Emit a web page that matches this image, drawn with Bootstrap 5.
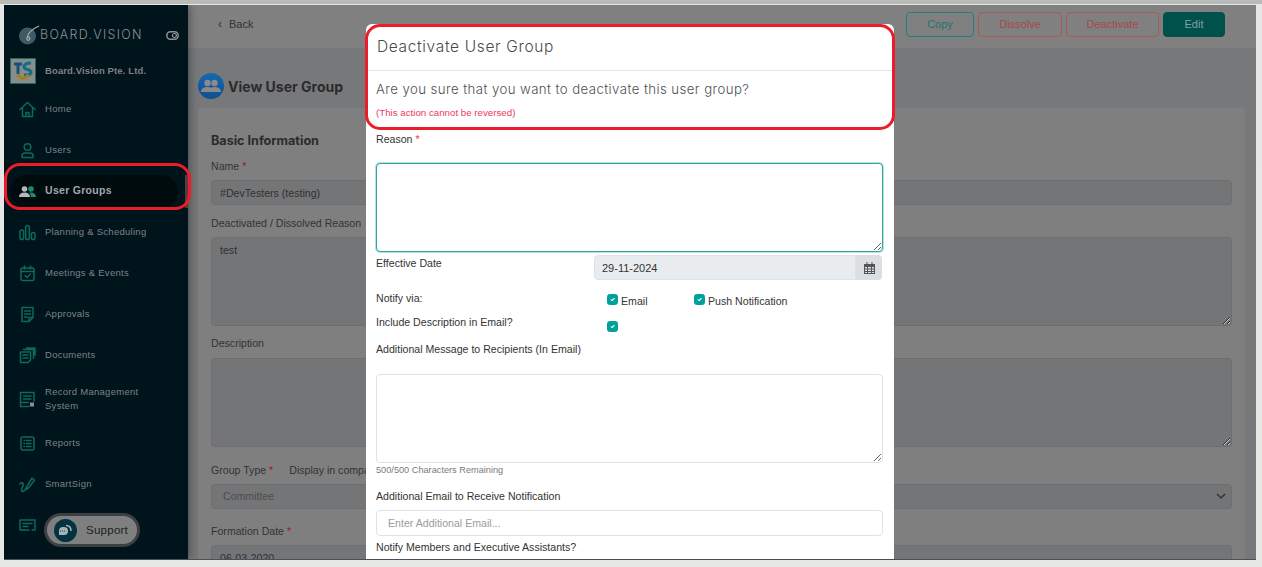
<!DOCTYPE html>
<html lang="en">
<head>
<meta charset="utf-8">
<title>View User Group</title>
<link href="https://cdn.jsdelivr.net/npm/bootstrap@5.3.0/dist/css/bootstrap.min.css" rel="stylesheet">
<style>
html,body{height:100%;overflow:hidden}
body{margin:0;padding:5px 6px 7px 4px;font-family:"Liberation Sans",Arial,sans-serif;font-size:10.6px;color:#2f3030;
 background:linear-gradient(#b9bbb9 0,#b9bbb9 4px,#e6e6e6 4px,#e6e8e6 100%)}
.frame{height:555px;overflow:hidden;border-bottom:1px solid #4a4f5a;background:#77787a}
.side{width:184px;flex:none;background:#00141c;box-shadow:2px 0 8px rgba(0,0,0,.35);z-index:2;color:#868c8e;padding-top:18px}
.brandrow{height:24px;padding-left:14px;padding-right:9px}
.brandtxt{font-family:Inter,"Liberation Sans",sans-serif;font-size:12.4px;font-weight:300;letter-spacing:1.35px;color:#8d9192}
.orgrow{margin-top:11px;padding-left:6px;height:26px}
.orgtxt{font-size:9.5px;font-weight:700;color:#7c8284;margin-left:9px;letter-spacing:.12px}
.orglogo{width:26px;height:26px;background:#8a8c8c;border:1px solid #1a6e60}
.navlist{margin-top:4.5px}
.navrow{height:41px;padding-left:15px;font-size:9.5px;color:#7d8385;letter-spacing:.28px}
.navrow svg{width:17px;height:17px;flex:none;margin-right:9px;fill:none;stroke:#0b6a5c;stroke-width:1.5;stroke-linecap:round;stroke-linejoin:round}
.navrow.tall{height:47.5px;line-height:14px}
.navrow.current{color:#a3a7a8;font-size:10.5px;font-weight:700;letter-spacing:.3px;background:none;position:relative}
.activepill{position:absolute;left:6px;top:4px;width:168px;height:33px;border-radius:17px;background:#000b0e}
.activebar{position:absolute;right:0;top:4px;width:3px;height:33px;background:#5a3a3e}
.current>svg,.current>span{position:relative}
.content{min-width:0}
.topbar{height:43px;background:#808080;padding:0 31px 4px 30px}
.backlink{color:#333;font-size:11px;text-decoration:none;margin-bottom:2px}
.backlink span{font-size:12px;margin-right:7px}
.tbtn{height:25px;font-size:11px;padding:0;border-radius:4px;--bs-btn-font-size:11px}
.tcopy{width:68px;color:#1f7472;border:1px solid #1f7f7d;background:none}
.tdis{width:84px;color:#a8484a;border:1px solid #a85a5a;background:none}
.tdea{width:93px;color:#a8484a;border:1px solid #a85a5a;background:none}
.tedit{width:62px;background:#00504c;color:#80a4a2;border:1px solid #00504c}
.pagehead{height:60px;padding:16px 0 0 10px}
.headcircle{width:26px;height:26px;border-radius:50%;background:linear-gradient(#1768b0,#0f4f90);margin-right:4px;flex:none}
.headtitle{font-family:Inter,"Liberation Sans",sans-serif;font-weight:700;font-size:14px;color:#2a2b2c}
.sheet{margin:0 11px 0 10px;background:#7f7f7f;padding:25px 13px 0;border-radius:4px 4px 0 0;height:460px;overflow:hidden}
.sheettitle{font-family:Inter,"Liberation Sans",sans-serif;font-weight:700;font-size:12.6px;color:#2a2b2c;line-height:16px;margin:0 0 11px}
.dimlabel{font-size:10.6px;line-height:13px;color:#333;margin-bottom:7px;display:block}
.dimlabel.roomy{margin-bottom:8px}
.dimlabel b{color:#a11;font-weight:400}
.dimfield,.dimfield:disabled{background:#747577;border:1px solid #6d6e70;border-radius:4px;color:#2f3030;font-size:10.6px;height:25px;padding:0 8px;margin-bottom:12px;box-shadow:none}
textarea.dimfield,textarea.dimfield:disabled{height:89px;padding:5px 8px;margin-bottom:11px;display:block}
.dimselect,.dimselect:disabled{background-color:#747577;border:1px solid #6d6e70;border-radius:4px;color:#4c4d4e;font-size:10.6px;height:25px;padding:0 11px;margin-bottom:16px;--bs-form-select-bg-img:none;background-image:none}
.groupline{margin-top:17px}
.selwrap{position:relative}
.selwrap svg{position:absolute;right:6px;top:9px;width:10px;height:7px;fill:none;stroke:#333;stroke-width:1.5}
.support{position:absolute;left:40px;top:508px;width:96px;height:34px;border-radius:17px;background:#7e8080;border:3px solid #3c4042;z-index:3;color:#1f2122;font-size:11.6px;letter-spacing:.2px}
.supportdot{width:23px;height:23px;border-radius:50%;background:#04323f;margin:0 9px 0 7px;flex:none}
.dialog{position:absolute;left:362px;top:19px;width:528px;height:540px;z-index:4}
.dialogbox{height:100%;border:0;border-radius:6px 6px 0 0;overflow:hidden;background:#fff;font-size:10.6px;color:#333}
.dialoghead{height:47px;padding:0 11px;border-bottom:1px solid #e4e4e4;border-radius:0}
.dialogtitle{font-family:Inter,"Liberation Sans",sans-serif;font-weight:300;font-size:15.5px;color:#4a4a4a;margin:0;letter-spacing:.65px}
.dialogbody{padding:9px 11px 0 10px;flex:none}
.question{font-family:Inter,"Liberation Sans",sans-serif;font-weight:300;font-size:13.2px;color:#4f4f4f;line-height:18px;margin:0;letter-spacing:.43px}
.warnline{color:#ee3a5c;font-size:9.72px;line-height:12px;margin:9px 0 0}
.flabel{line-height:13px;margin:0;font-size:10.6px;color:#333;display:block}
.flabel b{color:#e33;font-weight:400}
.reasonlabel{margin-top:14px}
.area{height:89px;border:1px solid #dee2e6;border-radius:4px;font-size:10.6px;display:block;box-shadow:none}
.area.lit,.area.lit:focus{border-color:#2fa6a2;box-shadow:0 0 0 1px #b9e3e1;margin-top:17px}
.lcol{width:218px;flex:none}
.daterow{margin-top:3px}
.datelabel{padding-top:2px}
.dateinput,.dateinput:read-only{background:#e9ecef;height:25px;border:1px solid #dee2e6;font-size:11px;padding:0 7px;color:#333;width:262px;flex:none;border-radius:4px 0 0 4px}
.dateaddon{width:26px;height:25px;background:#dcdfe2;border-radius:0 4px 4px 0;flex:none}
.tick{width:11px;height:11px;margin:0;border-radius:3px;background-color:#00a19d;border-color:#00a19d;flex:none;background-size:7px}
.tick:checked{background-color:#00a19d;border-color:#00a19d}
.ticktext{font-size:10.6px;margin:1px 0 0 3px;line-height:13px;color:#333}
.notifyrow{margin-top:12px}
.includerow{margin-top:8px}
.tickcol{padding:2px 0 0 13px}
.tickcol.low{padding-top:5px}
.mailcol{width:87px}
.msglabel{margin-top:11px}
.msgarea{margin-top:18px}
.counter{font-size:9.2px;color:#7a7a7a;line-height:11px;margin:2px 0 0}
.extralabel{margin-top:14px}
.mailinput{height:26px;font-size:10.6px;border:1px solid #dee2e6;padding:0 11px;border-radius:4px;margin-top:7px}
.mailinput::placeholder{color:#9b9b9b}
.notifylabel{margin-top:5px}
.ring{position:absolute;border-style:solid;border-color:#ed1c2a;z-index:5;pointer-events:none}
.ringmodal{left:361px;top:19px;width:530px;height:106px;border-width:3.5px;border-radius:15px}
.ringnav{left:0;top:158px;width:187px;height:47px;border-width:3.5px;border-radius:16px}
</style>
</head>
<body>
<div class="frame d-flex position-relative">
  <aside class="side">
    <div class="brandrow d-flex align-items-center">
      <svg width="22" height="22" viewBox="0 0 22 22" fill="none"><circle cx="9.500" cy="12" r="8.500" fill="#3f5a62"/><path d="M21 2C14 5 10 9 9 14c-.4 2 1 3 2.400 1.600 1.200-1.300 0-3-2-2.600" stroke="#a9b0b1" stroke-width="1.200"/></svg>
      <span class="brandtxt">BOARD.VISION</span>
      <svg class="ms-auto" width="13" height="9" viewBox="0 0 13 9" fill="none"><rect x=".8" y=".8" width="11.4" height="7.4" rx="3.7" stroke="#8d9192" stroke-width="1.5"/><circle cx="8.400" cy="4.500" r="2" stroke="#8d9192" stroke-width="1.200"/></svg>
    </div>
    <div class="orgrow d-flex align-items-center">
      <div class="orglogo d-flex align-items-center justify-content-center">
        <svg width="20" height="22" viewBox="0 0 20 22" fill="none"><path d="M1 4h8M5 4v10" stroke="#14527e" stroke-width="3"/><path d="M18 3c-4 0-7 1-7 4s7 2 7 5-3 3-7 3" stroke="#0e6f8a" stroke-width="3"/><path d="M4 15l6 4 6-4" stroke="#a87e1e" stroke-width="3"/></svg>
      </div>
      <span class="orgtxt">Board.Vision Pte. Ltd.</span>
    </div>
    <nav class="navlist">
      <div class="navrow d-flex align-items-center"><svg viewBox="0 0 17 17"><path d="M1 8.500 8.500 1.500 16 8.500M3.500 7v8.500h10V7M7 15.500v-4h3v4"/></svg><span>Home</span></div>
      <div class="navrow d-flex align-items-center"><svg viewBox="0 0 17 17"><circle cx="8.500" cy="5" r="3.300"/><path d="M3 15.500v-1.500c0-2 1.500-3 3-3h5c1.500 0 3 1 3 3v1.500z"/></svg><span>Users</span></div>
      <div class="navrow current d-flex align-items-center"><div class="activepill"></div><div class="activebar"></div><svg viewBox="0 0 17 17" style="stroke:none"><circle cx="5.500" cy="6" r="2.800" fill="#b5b8b8"/><path d="M0 14c0-3 2-4.500 5.500-4.500S11 11 11 14z" fill="#b5b8b8"/><circle cx="12" cy="6" r="2.800" fill="#1b8a74"/><path d="M11.800 14c0-2-.6-3.500-1.800-4.400 3.600-.7 7 .8 7 4.400z" fill="#1b8a74"/></svg><span>User Groups</span></div>
      <div class="navrow d-flex align-items-center"><svg viewBox="0 0 17 17"><rect x="1" y="6" width="3.600" height="9.500" rx="1.800"/><rect x="6.700" y="1.500" width="3.600" height="14" rx="1.800"/><rect x="12.400" y="8.500" width="3.600" height="7" rx="1.800"/></svg><span>Planning &amp; Scheduling</span></div>
      <div class="navrow d-flex align-items-center"><svg viewBox="0 0 17 17"><rect x="2" y="3" width="13" height="12.500" rx="1.500"/><path d="M2 6.500h13M5.500 1v3M11.500 1v3M6 10.500l2 2 3.500-3.500"/></svg><span>Meetings &amp; Events</span></div>
      <div class="navrow d-flex align-items-center"><svg viewBox="0 0 17 17"><path d="M3 1.500h11v10l-4 4H3zM10 15.500v-4h4M5.500 5h6M5.500 8h6M5.500 11h3"/></svg><span>Approvals</span></div>
      <div class="navrow d-flex align-items-center"><svg viewBox="0 0 17 17"><path d="M1.500 5h10v8l-2.500 2.500H1.500zM4.500 2.500h10v9M7.500 1h8.500v7M4 8h5M4 11h5"/></svg><span>Documents</span></div>
      <div class="navrow tall d-flex align-items-center"><svg viewBox="0 0 17 17"><path d="M15 10V1.500H1.500v14H10M4.500 5h7.500M4.500 8h7.500M1.500 11.500h8"/><rect x="11" y="11.500" width="4" height="4" fill="#8a8e8e" stroke="none"/></svg><span>Record Management<br>System</span></div>
      <div class="navrow d-flex align-items-center"><svg viewBox="0 0 17 17"><rect x="2" y="2" width="13" height="13" rx="2"/><path d="M5 5.500h.5M5 8.500h.5M5 11.500h.5M7.500 5.500H12M7.500 8.500H12M7.500 11.500H12"/></svg><span>Reports</span></div>
      <div class="navrow d-flex align-items-center"><svg viewBox="0 0 17 17"><path d="M1 8c2-2 4-1.500 3 1.500S1.500 15 3.500 15.500 7 12 8 10.500M8 10.500l-.5 3 2.500-2L15.500 4 13 2z"/></svg><span>SmartSign</span></div>
      <div class="navrow d-flex align-items-center"><svg viewBox="0 0 17 17"><path d="M10 13H1V3h15v10h-3M4 6.500h9M4 9.500h5"/></svg><span>Subscription Usage</span></div>
    </nav>
  </aside>

  <main class="content flex-grow-1">
    <div class="topbar d-flex align-items-center justify-content-between">
      <a class="backlink" href="#"><span>‹</span>Back</a>
      <div class="d-flex gap-1">
        <button type="button" class="btn tbtn tcopy">Copy</button>
        <button type="button" class="btn tbtn tdis">Dissolve</button>
        <button type="button" class="btn tbtn tdea">Deactivate</button>
        <button type="button" class="btn tbtn tedit">Edit</button>
      </div>
    </div>
    <div class="pagehead d-flex align-items-center">
      <div class="headcircle d-flex align-items-center justify-content-center">
        <svg width="20" height="14" viewBox="0 0 20 14"><circle cx="6.500" cy="4" r="3.200" fill="#8a8a8a"/><circle cx="13.500" cy="4" r="3.200" fill="#8a8a8a"/><path d="M0 13c0-3.500 3-5 6.500-5 1.500 0 2.600.3 3.500.8.900-.5 2-.8 3.500-.8 3.500 0 6.500 1.500 6.500 5z" fill="#8a8a8a"/></svg>
      </div>
      <span class="headtitle">View User Group</span>
    </div>
    <div class="sheet">
      <h5 class="sheettitle">Basic Information</h5>
      <label class="dimlabel">Name <b>*</b></label>
      <input class="form-control dimfield" disabled value="#DevTesters (testing)">
      <label class="dimlabel">Deactivated / Dissolved Reason</label>
      <textarea class="form-control dimfield" disabled>test</textarea>
      <label class="dimlabel roomy">Description</label>
      <textarea class="form-control dimfield" disabled></textarea>
      <div class="d-flex gap-3 groupline"><label class="dimlabel">Group Type <b>*</b></label><label class="dimlabel">Display in company</label></div>
      <div class="selwrap"><select class="form-select dimselect" disabled><option>Committee</option></select><svg viewBox="0 0 10 7"><path d="M1 1l4 4 4-4"/></svg></div>
      <label class="dimlabel">Formation Date <b>*</b></label>
      <input class="form-control dimfield" disabled value="06-03-2020">
    </div>
  </main>

  <div class="support d-flex align-items-center">
    <div class="supportdot d-flex align-items-center justify-content-center">
      <svg width="15" height="13" viewBox="0 0 15 13" fill="none"><path d="M1 7a4 4 0 0 1 4-4h1a4 4 0 0 1 0 8H1z" fill="#a5b4b8"/><circle cx="2.500" cy="7" r=".6" fill="#04323f"/><circle cx="4.500" cy="7" r=".6" fill="#04323f"/><circle cx="6.500" cy="7" r=".6" fill="#04323f"/><path d="M8 1.500c3 0 5 2.200 5 5.500" stroke="#a5b4b8" stroke-width="1.500"/></svg>
    </div>
    <span>Support</span>
  </div>

  <div class="dialog">
    <div class="modal-content dialogbox">
      <div class="modal-header dialoghead"><h5 class="modal-title dialogtitle">Deactivate User Group</h5></div>
      <div class="modal-body dialogbody">
        <p class="question">Are you sure that you want to deactivate this user group?</p>
        <p class="warnline">(This action cannot be reversed)</p>
        <label class="flabel reasonlabel">Reason <b>*</b></label>
        <textarea class="form-control area lit"></textarea>
        <div class="d-flex daterow">
          <label class="flabel lcol datelabel">Effective Date</label>
          <div class="d-flex">
            <input class="form-control dateinput" readonly value="29-11-2024">
            <div class="dateaddon d-flex align-items-center justify-content-center">
              <svg width="11" height="12" viewBox="0 0 11 12"><path d="M0 2h11v10H0z" fill="#555"/><path d="M1 5h2v1.500H1zM4 5h3v1.500H4zM8 5h2v1.500H8zM1 7.500h2V9H1zM4 7.500h3V9H4zM8 7.500h2V9H8zM1 10h2v1H1zM4 10h3v1H4zM8 10h2v1H8z" fill="#dcdfe2"/><path d="M2.500 0h1v3h-1zM7.500 0h1v3h-1z" fill="#555"/></svg>
            </div>
          </div>
        </div>
        <div class="d-flex align-items-start notifyrow">
          <label class="flabel lcol">Notify via:</label>
          <div class="d-flex tickcol">
            <div class="d-flex align-items-start mailcol"><input class="form-check-input tick" type="checkbox" checked><span class="ticktext">Email</span></div>
            <div class="d-flex align-items-start"><input class="form-check-input tick" type="checkbox" checked><span class="ticktext">Push Notification</span></div>
          </div>
        </div>
        <div class="d-flex align-items-start includerow">
          <label class="flabel lcol">Include Description in Email?</label>
          <div class="tickcol low"><input class="form-check-input tick d-block" type="checkbox" checked></div>
        </div>
        <label class="flabel msglabel">Additional Message to Recipients (In Email)</label>
        <textarea class="form-control area msgarea"></textarea>
        <p class="counter">500/500 Characters Remaining</p>
        <label class="flabel extralabel">Additional Email to Receive Notification</label>
        <input class="form-control mailinput" placeholder="Enter Additional Email...">
        <label class="flabel notifylabel">Notify Members and Executive Assistants?</label>
      </div>
    </div>
  </div>

  <div class="ring ringmodal"></div>
  <div class="ring ringnav"></div>
</div>
<script src="https://cdn.jsdelivr.net/npm/bootstrap@5.3.0/dist/js/bootstrap.bundle.min.js"></script>
</body>
</html>
